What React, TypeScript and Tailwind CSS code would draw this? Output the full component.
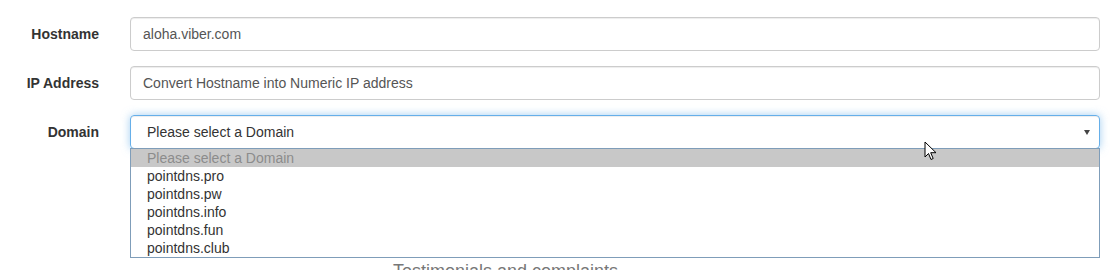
const font = { fontFamily: '"Liberation Sans", Arial, sans-serif' };

const domains = ["pointdns.pro", "pointdns.pw", "pointdns.info", "pointdns.fun", "pointdns.club"];

function Label({ children }: { children: React.ReactNode }) {
  return (
    <label className="w-[99px] shrink-0 text-right text-[14px] font-bold text-[#333] leading-[34px]">
      {children}
    </label>
  );
}

export default function App() {
  return (
    <div className="relative h-[270px] w-[1115px] overflow-hidden bg-white" style={font}>
      <div className="pt-[17px] pr-[15px]">
        {/* Hostname */}
        <div className="flex items-center gap-[31px] mb-[15px]">
          <Label>Hostname</Label>
          <div className="flex-1 h-[34px] border border-[#ccc] rounded-[4px] px-[12px] text-[14px] text-[#555] leading-[32px] shadow-[inset_0_1px_1px_rgba(0,0,0,0.075)]">
            aloha.viber.com
          </div>
        </div>

        {/* IP Address */}
        <div className="flex items-center gap-[31px] mb-[15px]">
          <Label>IP Address</Label>
          <div className="flex-1 h-[34px] border border-[#ccc] rounded-[4px] px-[12px] text-[14px] text-[#555] leading-[32px] shadow-[inset_0_1px_1px_rgba(0,0,0,0.075)]">
            Convert Hostname into Numeric IP address
          </div>
        </div>

        {/* Domain */}
        <div className="flex items-center gap-[31px]">
          <Label>Domain</Label>
          <div className="relative flex-1">
            <div className="flex h-[34px] items-center justify-between border border-[#66afe9] rounded-[4px] pl-[16px] pr-[8px] text-[14px] text-[#333] shadow-[inset_0_1px_1px_rgba(0,0,0,0.075),0_0_8px_rgba(102,175,233,0.6)]">
              <span>Please select a Domain</span>
              <svg width="6" height="5" viewBox="0 0 6 5" className="mr-[1px]">
                <path d="M0 0h6L3 5z" fill="#444" />
              </svg>
            </div>

            {/* open native dropdown */}
            <div className="absolute left-0 right-0 top-[33px] z-10 border border-[#7f9db9] bg-white text-[14px] leading-[18px]">
              <div className="bg-[#c8c8c8] pl-[16px] text-[#8c8c8c]">Please select a Domain</div>
              {domains.map((d) => (
                <div key={d} className="pl-[16px] text-[#333]">
                  {d}
                </div>
              ))}
            </div>
          </div>
        </div>

        <div className="mt-[112px] pl-[393px] text-[18px] leading-[20px] text-[#777]">
          Testimonials and complaints
        </div>
      </div>

      {/* mouse cursor */}
      <svg className="absolute left-[924px] top-[141px] z-20" width="13" height="20" viewBox="0 0 13 20">
        <path d="M1 1v15l3.5-3.5 2.5 6 2.2-1-2.5-5.8H12z" fill="#fff" stroke="#000" strokeWidth="1" strokeLinejoin="round" />
      </svg>
    </div>
  );
}
